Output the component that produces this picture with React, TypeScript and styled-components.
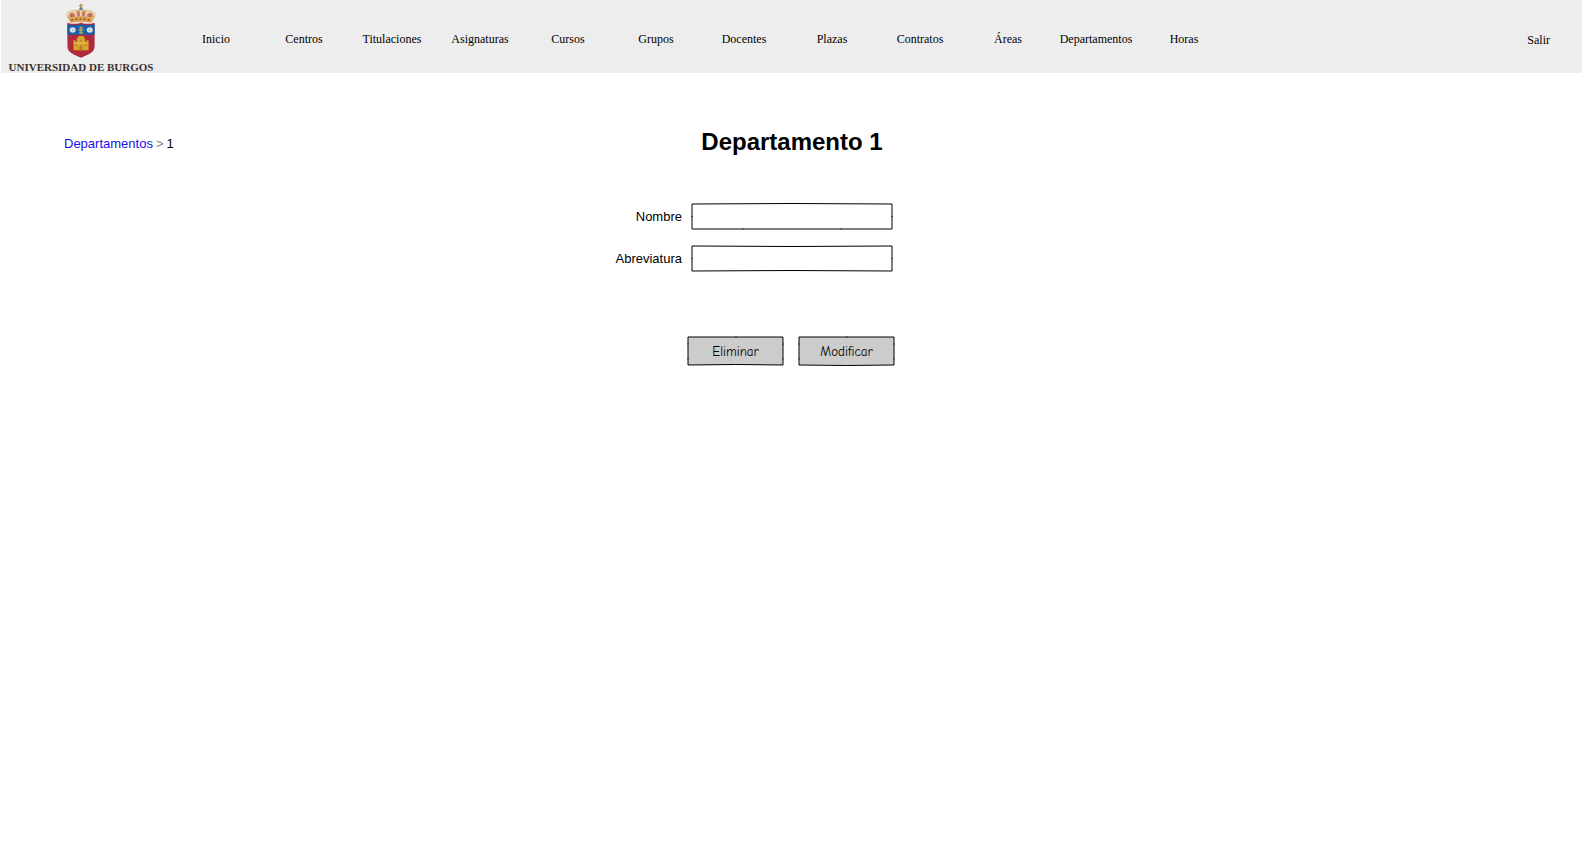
import React from "react";
import styled, { createGlobalStyle } from "styled-components";

const GlobalStyle = createGlobalStyle`
  *, *::before, *::after { box-sizing: border-box; }
  body {
    margin: 0;
    background: #fff;
    color: #000;
    font-family: "Liberation Sans", Arial, sans-serif;
    font-size: 13px;
    line-height: 16px;
  }
`;

const Header = styled.header`
  display: flex;
  align-items: center;
  height: 73px;
  margin-left: 1px;
  padding: 6px 32px 0 0;
  background: #ededed;
  font-family: "Liberation Serif", "Times New Roman", serif;
  font-size: 12px;
`;

const Brand = styled.a`
  display: flex;
  flex-direction: column;
  align-items: center;
  align-self: flex-end;
  flex: none;
  gap: 2px;
  width: 160px;
  color: #3a3232;
  font-size: 11px;
  font-weight: bold;
  line-height: 12px;
  text-decoration: none;
  white-space: nowrap;
`;

const Nav = styled.nav`
  flex: 1;
  margin-left: 11px;
  padding-bottom: 2px;
`;

const NavList = styled.ul`
  display: flex;
  margin: 0;
  padding: 0;
  list-style: none;
`;

const NavItem = styled.li`
  flex: 0 1 88px;
  text-align: center;
`;

const NavLink = styled.a`
  color: #000;
  text-decoration: none;
`;

const Main = styled.main`
  padding-bottom: 64px;
`;

const TitleBar = styled.div`
  display: grid;
  grid-template-columns: 1fr auto 1fr;
  align-items: center;
  margin-top: 53px;
  padding-left: 2px;
`;

const Breadcrumb = styled.nav`
  display: flex;
  gap: 3px;
  padding: 4px 0 0 62px;
  color: #808080;
`;

const CrumbLink = styled.a`
  color: #1a10e8;
  text-decoration: none;
`;

const Current = styled.span`
  color: #000;
`;

const Title = styled.h1`
  margin: 0;
  font-size: 24px;
  line-height: 32px;
`;

const Fields = styled.div`
  display: grid;
  grid-template-columns: 1fr 200px 1fr;
  gap: 17px 10px;
  margin-top: 46px;
  padding-left: 2px;
`;

const Label = styled.label`
  grid-column: 1;
  padding-top: 5px;
  text-align: right;
`;

const Sketch = styled.div`
  position: relative;
  height: 25px;
`;

const Outline = styled.svg`
  position: absolute;
  inset: 0;
  width: 100%;
  height: 100%;
  overflow: visible;
  fill: none;
  stroke: #000;
  pointer-events: none;
`;

const Input = styled.input`
  display: block;
  width: 100%;
  height: 100%;
  padding: 0 6px;
  border: 0;
  background: transparent;
  font: inherit;
`;

const Actions = styled.div`
  display: flex;
  justify-content: center;
  gap: 16px;
  margin-top: 66px;
`;

const ButtonFrame = styled.div`
  position: relative;
  width: 95px;
  height: 28px;
`;

const Button = styled.button`
  display: block;
  width: 100%;
  height: 100%;
  padding: 2px 0 0;
  border: 0;
  background: #ccc;
  color: #000;
  font-family: "Comic Sans MS", "Comic Neue", "Open Sans", sans-serif;
  font-size: 13px;
  line-height: 16px;
`;

const links = [
  "Inicio", "Centros", "Titulaciones", "Asignaturas", "Cursos", "Grupos",
  "Docentes", "Plazas", "Contratos", "Áreas", "Departamentos", "Horas",
];

function Crest() {
  return (
    <svg width="34" height="56" viewBox="45 9 90 168" preserveAspectRatio="none" aria-hidden="true">
      {/* crown */}
      <path d="M62 67 L52 49 Q49 36 61 33 Q70 27 81 30 L90 23 L99 30 Q110 27 119 33 Q131 36 128 49 L118 67Z" fill="#d9b17c" />
      <path d="M63 52 Q57 45 64 39 Q72 38 73 50Z M81 49 Q75 38 85 34 L87 49Z M99 49 Q105 38 95 34 L93 49Z M117 52 Q123 45 116 39 Q108 38 107 50Z" fill="#c4696a" />
      <path d="M55 48 Q51 39 62 36 Q77 33 79 47 M125 48 Q129 39 118 36 Q103 33 101 47 M90 25 V49" fill="none" stroke="#e9d5a5" strokeWidth="4" />
      <path d="M90 11 V27 M85 17 H95" stroke="#b69748" strokeWidth="4" />
      <circle cx="90" cy="26" r="4" fill="#5877a6" />
      <path d="M58 54 Q90 45 122 54 L118 68 Q90 61 62 68Z" fill="#d7a650" />
      <path d="M64 61 Q90 53 116 61" fill="none" stroke="#b44a43" strokeWidth="5" strokeDasharray="6 5" />
      <g fill="#eee3c9"><circle cx="55" cy="43" r="3" /><circle cx="72" cy="32" r="3" /><circle cx="108" cy="32" r="3" /><circle cx="125" cy="43" r="3" /></g>
      {/* shield */}
      <path d="M54 68 Q72 75 90 68 Q108 75 126 68 V139 Q126 156 108 164 L90 173 L72 164 Q54 156 54 139Z" fill="#b02a3c" />
      <path d="M54 73 Q72 78 90 73 Q108 78 126 73 V104 H54Z" fill="#175fa8" />
      <g fill="#d9e2ed"><circle cx="68" cy="90" r="8" /><circle cx="113" cy="90" r="8" /></g>
      <g fill="#b4c2d8"><circle cx="68" cy="90" r="3" /><circle cx="113" cy="90" r="3" /></g>
      <path d="M90 80 V100 M83 90 H97 M85 82 H95 M85 99 H95" stroke="#b6aa57" strokeWidth="4" />
      {/* castle */}
      <path d="M70 151 V121 H75 V125 H79 V113 H83 V108 H97 V113 H101 V125 H105 V121 H110 V151Z" fill="#d7a52f" />
      <path d="M86 151 V139 Q90 133 94 139 V151Z M75 132h4v6h-4Z M101 132h4v6h-4Z M88 119h4v6h-4Z" fill="#b9802a" />
      <path d="M73 129 H107" stroke="#e9c552" strokeWidth="3" />
    </svg>
  );
}

function Field({ id, label, outline, ticks }: { id: string; label: string; outline: string; ticks: string }) {
  return (
    <>
      <Label htmlFor={id}>{label}</Label>
      <Sketch>
        <Input id={id} name={id} type="text" />
        <Outline viewBox="0 0 200 25" preserveAspectRatio="none" aria-hidden="true">
          <path d={outline} />
          <path d={ticks} strokeOpacity="0.5" />
        </Outline>
      </Sketch>
    </>
  );
}

function SketchButton({ children, bow }: { children: string; bow: number }) {
  return (
    <ButtonFrame>
      <Button type="button">{children}</Button>
      <Outline viewBox="0 0 95 28" preserveAspectRatio="none" aria-hidden="true">
        <path d={`M0 28 V0 H95 V28 Q48 ${28 + bow} 0 28 Z`} />
        <path d="M48 -1 V1 M-1 7 H1 M-1 22 H1 M94 7 H96 M94 22 H96" strokeOpacity="0.5" />
      </Outline>
    </ButtonFrame>
  );
}

export default function App() {
  return (
    <>
      <GlobalStyle />
      <Header>
        <Brand href="#">
          <Crest />
          UNIVERSIDAD DE BURGOS
        </Brand>
        <Nav aria-label="Principal">
          <NavList>
            {links.map((name) => (
              <NavItem key={name}>
                <NavLink href="#">{name}</NavLink>
              </NavItem>
            ))}
          </NavList>
        </Nav>
        <NavLink href="#">Salir</NavLink>
      </Header>
      <Main>
        <TitleBar>
          <Breadcrumb aria-label="Ruta">
            <CrumbLink href="#">Departamentos</CrumbLink>
            <span>&gt;</span>
            <Current aria-current="page">1</Current>
          </Breadcrumb>
          <Title>Departamento 1</Title>
        </TitleBar>
        <form>
          <Fields>
            <Field
              id="nombre"
              label="Nombre"
              outline="M0 0 Q100 -1 200 0 V25 H0 Z"
              ticks="M-1 12.5 H1 M199 12.5 H201 M51 24 V26 M149 24 V26"
            />
            <Field
              id="abreviatura"
              label="Abreviatura"
              outline="M0 0 Q100 1 200 0 V25 Q100 24 0 25 Z"
              ticks="M-1 12.5 H1 M199 12.5 H201"
            />
          </Fields>
          <Actions>
            <SketchButton bow={-1}>Eliminar</SketchButton>
            <SketchButton bow={1}>Modificar</SketchButton>
          </Actions>
        </form>
      </Main>
    </>
  );
}
